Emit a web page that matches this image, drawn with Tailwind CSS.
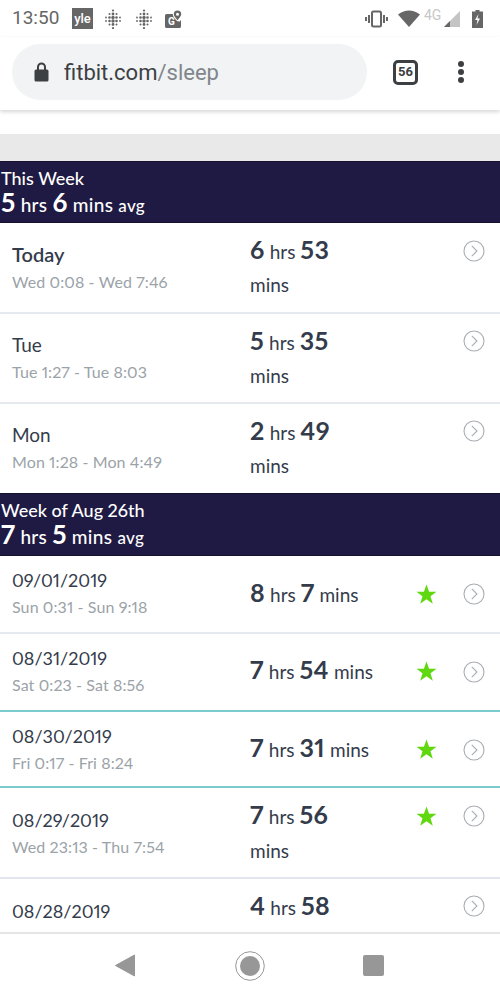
<!DOCTYPE html>
<html>
<head>
    <meta charset="UTF-8" />
    <title>Sleep</title>
    <script src="https://cdn.jsdelivr.net/npm/@tailwindcss/browser@4"></script>
</head>
<body class="bg-white">
<svg class="hidden">
    <symbol id="fitbit" viewBox="0 0 20 20">
        <g fill="#666">
            <circle cx="10" cy="1.500" r="1.100"/><circle cx="10" cy="5" r="1.400"/><circle cx="10" cy="8.500" r="1.700"/><circle cx="10" cy="12" r="1.700"/><circle cx="10" cy="15.500" r="1.400"/><circle cx="10" cy="19" r="1.100"/>
            <circle cx="6.500" cy="5" r="1"/><circle cx="6.500" cy="8.500" r="1.300"/><circle cx="6.500" cy="12" r="1.300"/><circle cx="6.500" cy="15.500" r="1"/>
            <circle cx="13.500" cy="5" r="1"/><circle cx="13.500" cy="8.500" r="1.300"/><circle cx="13.500" cy="12" r="1.300"/><circle cx="13.500" cy="15.500" r="1"/>
            <circle cx="3" cy="8.500" r=".9"/><circle cx="3" cy="12" r=".9"/><circle cx="17" cy="8.500" r=".9"/><circle cx="17" cy="12" r=".9"/>
        </g>
    </symbol>
    <symbol id="chevron" viewBox="0 0 22 22">
        <circle cx="11" cy="11" r="10" fill="none" stroke="#a9adb2" stroke-width="1.100"/>
        <path d="M8.800 5.800 14 11l-5.200 5.200" fill="none" stroke="#a9adb2" stroke-width="1.100"/>
    </symbol>
    <symbol id="star" viewBox="0 0 22 22">
        <path d="M11 .5l2.700 7.600h7.800l-6.300 4.800 2.400 7.900L11 16l-6.600 4.800 2.400-7.900L.5 8.100h7.800z" fill="#5fd80f"/>
    </symbol>
</svg>

<div class="w-[500px] h-[999px] overflow-hidden flex flex-col font-['Lato',sans-serif] proportional-nums text-[#343c4c]">

    <!-- status bar -->
    <div class="h-[37px] flex items-center pl-3 pr-[17px] font-['Roboto',sans-serif] tabular-nums">
        <span class="text-[19px] text-[#666] w-[60px]">13:50</span>
        <span class="w-[21px] h-[21px] bg-[#666] text-white text-[13px] font-medium flex items-center justify-center leading-none">yle</span>
        <svg class="w-[20px] h-[20px] ml-[10px]"><use href="#fitbit"/></svg>
        <svg class="w-[20px] h-[20px] ml-[11px]"><use href="#fitbit"/></svg>
        <div class="relative w-[18px] h-[20px] ml-[11px]">
            <svg class="w-[18px] h-[20px]" viewBox="0 0 18 20">
                <path d="M1.500 5h8.500c0 3 2 5 4 8l2-2v6.500a1.500 1.500 0 0 1-1.500 1.500h-13A1.500 1.500 0 0 1 0 17.500v-11A1.500 1.500 0 0 1 1.500 5z" fill="#666"/>
                <path d="M12.500 0.500a4.700 4.700 0 0 1 4.700 4.700c0 3-4.700 7.300-4.700 7.300s-4.700-4.300-4.700-7.300a4.700 4.700 0 0 1 4.700-4.700z" fill="#fff"/>
                <path d="M12.500 1.500a3.700 3.700 0 0 1 3.700 3.700c0 2.200-3.700 5.800-3.700 5.800s-3.700-3.600-3.700-5.800a3.700 3.700 0 0 1 3.700-3.700z" fill="#666"/>
                <circle cx="12.500" cy="5.200" r="1.500" fill="#fff"/>
            </svg>
            <span class="absolute left-[3px] bottom-[1px] text-[10px] leading-[12px] font-bold text-white">G</span>
        </div>
        <div class="ml-auto flex items-center">
            <svg class="w-[23px] h-[18px]" viewBox="0 0 23 18" fill="none" stroke="#666">
                <rect x="7" y="1.500" width="9" height="15" rx="1.500" stroke-width="2"/>
                <path d="M4 5v8M1 7v4M19 5v8M22 7v4" stroke-width="2"/>
            </svg>
            <svg class="w-[22px] h-[17px] ml-[10px]" viewBox="0 0 22 17"><path d="M0 4.500Q11-3.500 22 4.500L11 17z" fill="#666"/></svg>
            <span class="text-[14px] text-[#c8c8c8] ml-[4px] w-[20px] -mt-[6px]">4G</span>
            <svg class="w-[16px] h-[16px]" viewBox="0 0 16 16"><path d="M0 16 16 0v16z" fill="#c4c4c4"/><path d="M0 16l6-6v6z" fill="#666"/></svg>
            <svg class="w-[11px] h-[18px] ml-[12px]" viewBox="0 0 11 18">
                <path d="M3.500 0h4v1.500H11V18H0V1.500h3.500z" fill="#666"/>
                <path d="M6.500 4 3 10h2.500L4.500 15 8 8.500H5.500z" fill="#fff"/>
            </svg>
        </div>
    </div>

    <!-- browser toolbar -->
    <div class="h-[73px] flex items-center pl-3 pb-[3px] shadow-[0_2px_4px_rgba(0,0,0,0.16)] font-['Roboto',sans-serif] tabular-nums relative">
        <div class="w-[355px] h-[56px] rounded-full bg-[#f1f3f4] flex items-center pl-[22px]">
            <svg class="w-[15px] h-[20px]" viewBox="0 0 15 20">
                <path d="M2 7.500h1V5a4.500 4.500 0 0 1 9 0v2.500h1A1.500 1.500 0 0 1 14.500 9v9a1.500 1.500 0 0 1-1.500 1.500H2A1.500 1.500 0 0 1 .5 18V9A1.500 1.500 0 0 1 2 7.500zM5 7.500h5V5a2.500 2.500 0 0 0-5 0z" fill="#3c4043"/>
            </svg>
            <span class="ml-[15px] text-[22px] text-[#3c4043]">fitbit.com<span class="text-[#80868b]">/sleep</span></span>
        </div>
        <div class="ml-[26px] w-[25px] h-[25px] border-[3px] border-[#3c4043] rounded-[5px] flex items-center justify-center text-[13px] font-bold text-[#3c4043]">56</div>
        <div class="ml-[40px] flex flex-col gap-[2px]">
            <span class="w-[6px] h-[6px] rounded-full bg-[#3c4043]"></span>
            <span class="w-[6px] h-[6px] rounded-full bg-[#3c4043]"></span>
            <span class="w-[6px] h-[6px] rounded-full bg-[#3c4043]"></span>
        </div>
    </div>

    <div class="h-[24px]"></div>
    <div class="h-[27px] bg-[#e9e9e9]"></div>

    <!-- this week -->
    <div class="h-[62px] bg-[#1f1a43] text-white pl-px pt-[5px] border-t border-b border-[#15112f]">
        <p class="text-[18px] leading-[22px] font-medium">This Week</p>
        <p class="text-[19px] tracking-[0.3px] leading-[26px] font-medium"><span class="text-[26px] font-bold">5</span> hrs <span class="text-[26px] font-bold">6</span> mins <span class="text-[17px]">avg</span></p>
    </div>

    <div class="h-[91px] flex pl-3 border-b-2 border-[#e6e9ee]">
        <div class="w-[238px] pt-[18px]">
            <p class="text-[20px] leading-[26px] font-semibold">Today</p>
            <p class="text-[16px] tracking-[0.1px] leading-[20px] mt-[5px] text-[#9ba3a8]">Wed 0:08 - Wed 7:46</p>
        </div>
        <div class="w-[213px] pt-[8px] text-[19px]"><b class="text-[25px] tracking-[0.5px] leading-[34px] font-bold">6</b> hrs <b class="text-[25px] tracking-[0.5px] font-bold">53</b><br><span class="leading-[31px]">mins</span></div>
        <svg class="w-[22px] h-[22px] mt-[17px]"><use href="#chevron"/></svg>
    </div>
    <div class="h-[90px] flex pl-3 border-b-2 border-[#e6e9ee]">
        <div class="w-[238px] pt-[18px]">
            <p class="text-[19px] leading-[26px]">Tue</p>
            <p class="text-[16px] tracking-[0.1px] leading-[20px] mt-[4px] text-[#9ba3a8]">Tue 1:27 - Tue 8:03</p>
        </div>
        <div class="w-[213px] pt-[8px] text-[19px]"><b class="text-[25px] tracking-[0.5px] leading-[34px] font-bold">5</b> hrs <b class="text-[25px] tracking-[0.5px] font-bold">35</b><br><span class="leading-[31px]">mins</span></div>
        <svg class="w-[22px] h-[22px] mt-[16px]"><use href="#chevron"/></svg>
    </div>
    <div class="h-[89px] flex pl-3">
        <div class="w-[238px] pt-[18px]">
            <p class="text-[19px] leading-[26px]">Mon</p>
            <p class="text-[16px] tracking-[0.1px] leading-[20px] mt-[4px] text-[#9ba3a8]">Mon 1:28 - Mon 4:49</p>
        </div>
        <div class="w-[213px] pt-[8px] text-[19px]"><b class="text-[25px] tracking-[0.5px] leading-[34px] font-bold">2</b> hrs <b class="text-[25px] tracking-[0.5px] font-bold">49</b><br><span class="leading-[31px]">mins</span></div>
        <svg class="w-[22px] h-[22px] mt-[16px]"><use href="#chevron"/></svg>
    </div>

    <!-- week of aug 26 -->
    <div class="h-[63px] bg-[#1f1a43] text-white pl-px pt-[5px] border-t border-b border-[#15112f]">
        <p class="text-[18px] leading-[22px] font-medium">Week of Aug 26th</p>
        <p class="text-[19px] tracking-[0.3px] leading-[26px] font-medium"><span class="text-[26px] font-bold">7</span> hrs <span class="text-[26px] font-bold">5</span> mins <span class="text-[17px]">avg</span></p>
    </div>

    <div class="h-[78px] flex pl-3 border-b-2 border-[#e6e9ee]">
        <div class="w-[238px] pt-[11px]">
            <p class="text-[18px] leading-[26px]">09/01/2019</p>
            <p class="text-[16px] tracking-[0.1px] leading-[20px] mt-[4px] text-[#9ba3a8]">Sun 0:31 - Sun 9:18</p>
        </div>
        <div class="w-[166px] pt-[18px] text-[19px]"><b class="text-[25px] tracking-[0.5px] leading-[34px] font-bold">8</b> hrs <b class="text-[25px] tracking-[0.5px] font-bold">7</b> mins</div>
        <svg class="w-[21px] h-[21px] mt-[28px]"><use href="#star"/></svg>
        <svg class="w-[22px] h-[22px] ml-[26px] mt-[27px]"><use href="#chevron"/></svg>
    </div>
    <div class="h-[78px] flex pl-3 border-b-2 border-[#7accce]">
        <div class="w-[238px] pt-[11px]">
            <p class="text-[18px] leading-[26px]">08/31/2019</p>
            <p class="text-[16px] tracking-[0.1px] leading-[20px] mt-[4px] text-[#9ba3a8]">Sat 0:23 - Sat 8:56</p>
        </div>
        <div class="w-[166px] pt-[17px] text-[19px]"><b class="text-[25px] tracking-[0.5px] leading-[34px] font-bold">7</b> hrs <b class="text-[25px] tracking-[0.5px] font-bold">54</b> mins</div>
        <svg class="w-[21px] h-[21px] mt-[27px]"><use href="#star"/></svg>
        <svg class="w-[22px] h-[22px] ml-[26px] mt-[27px]"><use href="#chevron"/></svg>
    </div>
    <div class="h-[76px] flex pl-3 border-b-2 border-[#7accce]">
        <div class="w-[238px] pt-[11px]">
            <p class="text-[18px] leading-[26px]">08/30/2019</p>
            <p class="text-[16px] tracking-[0.1px] leading-[20px] mt-[4px] text-[#9ba3a8]">Fri 0:17 - Fri 8:24</p>
        </div>
        <div class="w-[166px] pt-[17px] text-[19px]"><b class="text-[25px] tracking-[0.5px] leading-[34px] font-bold">7</b> hrs <b class="text-[25px] tracking-[0.5px] font-bold">31</b> mins</div>
        <svg class="w-[21px] h-[21px] mt-[27px]"><use href="#star"/></svg>
        <svg class="w-[22px] h-[22px] ml-[26px] mt-[27px]"><use href="#chevron"/></svg>
    </div>
    <div class="h-[91px] flex pl-3 border-b-2 border-[#e1e6ee]">
        <div class="w-[238px] pt-[19px]">
            <p class="text-[18px] leading-[26px]">08/29/2019</p>
            <p class="text-[16px] tracking-[0.1px] leading-[20px] mt-[4px] text-[#9ba3a8]">Wed 23:13 - Thu 7:54</p>
        </div>
        <div class="w-[166px] pt-[8px] text-[19px]"><b class="text-[25px] tracking-[0.5px] leading-[34px] font-bold">7</b> hrs <b class="text-[25px] tracking-[0.5px] font-bold">56</b><br><span class="leading-[33px]">mins</span></div>
        <svg class="w-[21px] h-[21px] mt-[18px]"><use href="#star"/></svg>
        <svg class="w-[22px] h-[22px] ml-[26px] mt-[17px]"><use href="#chevron"/></svg>
    </div>
    <div class="h-[55px] flex pl-3 border-b-2 border-[#e6e6e6]">
        <div class="w-[238px] pt-[19px]">
            <p class="text-[18px] leading-[26px]">08/28/2019</p>
        </div>
        <div class="w-[213px] pt-[8px] text-[19px]"><b class="text-[25px] tracking-[0.5px] leading-[34px] font-bold">4</b> hrs <b class="text-[25px] tracking-[0.5px] font-bold">58</b></div>
        <svg class="w-[22px] h-[22px] mt-[16px]"><use href="#chevron"/></svg>
    </div>

    <!-- android nav -->
    <div class="flex-1 flex items-center pb-[2px] pl-[115px]">
        <svg class="w-[20px] h-[23px]" viewBox="0 0 20 23"><path d="M19.500 1v21L.5 11.500z" fill="#979797" stroke="#979797" stroke-linejoin="round"/></svg>
        <svg class="w-[30px] h-[30px] ml-[100px]" viewBox="0 0 30 30"><circle cx="15" cy="15" r="14.300" fill="none" stroke="#979797"/><circle cx="15" cy="15" r="10" fill="#979797"/></svg>
        <div class="w-[21px] h-[21px] ml-[98px] bg-[#979797] rounded-[2px]"></div>
    </div>
</div>
</body>
</html>
